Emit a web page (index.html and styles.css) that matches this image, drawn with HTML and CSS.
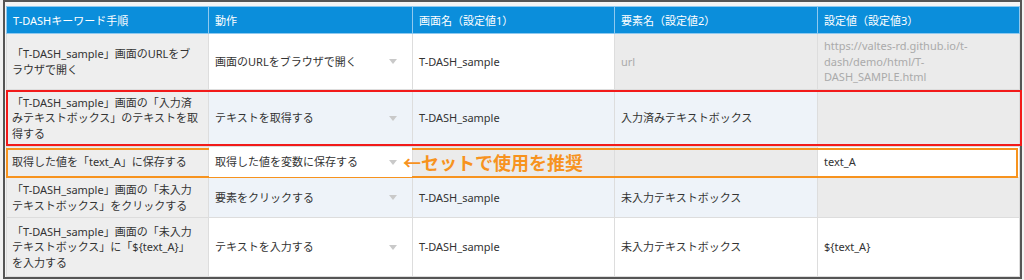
FILE: index.html
```html
<!DOCTYPE html>
<html lang="ja">
<head>
<meta charset="utf-8">
<title>T-DASH keywords</title>
<link rel="stylesheet" href="styles.css">
</head>
<body>
<div class="frame">
  <table class="grid">
    <colgroup>
      <col class="c1"><col class="c2"><col class="c3"><col class="c4"><col class="c5">
    </colgroup>
    <thead>
      <tr class="head">
        <th>T-DASHキーワード手順</th>
        <th>動作</th>
        <th>画面名（設定値1）</th>
        <th>要素名（設定値2）</th>
        <th>設定値（設定値3）</th>
      </tr>
    </thead>
    <tbody>
      <tr class="r1">
        <td class="step">「T-DASH_sample」画面のURLをブ<br>ラウザで開く</td>
        <td><div class="sel"><span>画面のURLをブラウザで開く</span><i class="caret"></i></div></td>
        <td>T-DASH_sample</td>
        <td class="off">url</td>
        <td class="off">https://valtes-rd.github.io/t-<br>dash/demo/html/T-<br>DASH_SAMPLE.html</td>
      </tr>
      <tr class="r2 alt">
        <td class="step mark-host">「T-DASH_sample」画面の「入力済<br>みテキストボックス」のテキストを取<br>得する<span class="mark-red"></span></td>
        <td><div class="sel"><span>テキストを取得する</span><i class="caret"></i></div></td>
        <td>T-DASH_sample</td>
        <td>入力済みテキストボックス</td>
        <td class="off"></td>
      </tr>
      <tr class="r3">
        <td class="step mark-host">取得した値を「text_A」に保存する<span class="mark-orange"></span></td>
        <td class="note-host"><div class="sel"><span>取得した値を変数に保存する</span><i class="caret"></i></div><span class="note">←セットで使用を推奨</span></td>
        <td class="off"></td>
        <td class="off"></td>
        <td>text_A</td>
      </tr>
      <tr class="r4 alt">
        <td class="step">「T-DASH_sample」画面の「未入力<br>テキストボックス」をクリックする</td>
        <td><div class="sel"><span>要素をクリックする</span><i class="caret"></i></div></td>
        <td>T-DASH_sample</td>
        <td>未入力テキストボックス</td>
        <td class="off"></td>
      </tr>
      <tr class="r5">
        <td class="step">「T-DASH_sample」画面の「未入力<br>テキストボックス」に「${text_A}」<br>を入力する</td>
        <td><div class="sel"><span>テキストを入力する</span><i class="caret"></i></div></td>
        <td>T-DASH_sample</td>
        <td>未入力テキストボックス</td>
        <td>${text_A}</td>
      </tr>
    </tbody>
  </table>
</div>
</body>
</html>
```

FILE: styles.css
```css
html, body {
  margin: 0;
  padding: 0;
  background: #f2f2f2;
}

body {
  width: 1024px;
  height: 280px;
  overflow: hidden;
  font-family: "Noto Sans", "Noto Sans CJK JP", sans-serif;
  font-size: 11px;
  color: #333333;
}

.frame {
  margin: 0 2px 0 3px;
  border: 2px solid #555555;
  padding: 4px 1px 1px 1px;
  background: #f4f4f4;
  box-sizing: border-box;
  height: 279px;
}

.grid {
  width: 1013px;
  table-layout: fixed;
  border-collapse: collapse;
  background: #ffffff;
}

.c1 { width: 202px; }
.c2 { width: 204px; }
.c3 { width: 202px; }
.c4 { width: 203px; }
.c5 { width: 202px; }

.head th {
  height: 26px;
  padding: 0 6px;
  background: #0b8edb;
  color: #ffffff;
  font-weight: normal;
  text-align: left;
  vertical-align: middle;
  border: 1px solid #8fc9ef;
  white-space: nowrap;
}

.grid td {
  padding: 0 6px;
  line-height: 15.5px;
  vertical-align: middle;
  border: 1px solid #dddddd;
  background: #ffffff;
}

.r1 { height: 56px; }
.r2 { height: 57px; }
.r3 { height: 31px; }
.r4 { height: 40px; }
.r5 { height: 59px; }

.grid .alt td {
  background: #eef3f9;
}

.grid td.step {
  background: #eeeeee;
  padding-left: 5px;
}

.grid td.off {
  background: #ebebeb;
  color: #aaaaaa;
}

.sel {
  display: flex;
  align-items: center;
  justify-content: space-between;
}

.caret {
  width: 0;
  height: 0;
  margin-right: 9px;
  border-left: 4.5px solid transparent;
  border-right: 4.5px solid transparent;
  border-top: 5px solid #c9c9c9;
}

.mark-host,
.note-host {
  position: relative;
}

.mark-red {
  position: absolute;
  left: -1px;
  top: 0;
  bottom: 0;
  width: 1016px;
  border: 2px solid #f21a1a;
  box-sizing: border-box;
}

.mark-orange {
  position: absolute;
  left: -1px;
  top: 1px;
  bottom: -1px;
  width: 1012px;
  border: 2px solid #f7931e;
  box-sizing: border-box;
}

.note {
  position: absolute;
  left: 194px;
  top: 50%;
  transform: translateY(-50%);
  color: #f7931e;
  font-family: "Noto Sans CJK JP", sans-serif;
  font-size: 18px;
  font-weight: bold;
  line-height: 20px;
  white-space: nowrap;
}
```
